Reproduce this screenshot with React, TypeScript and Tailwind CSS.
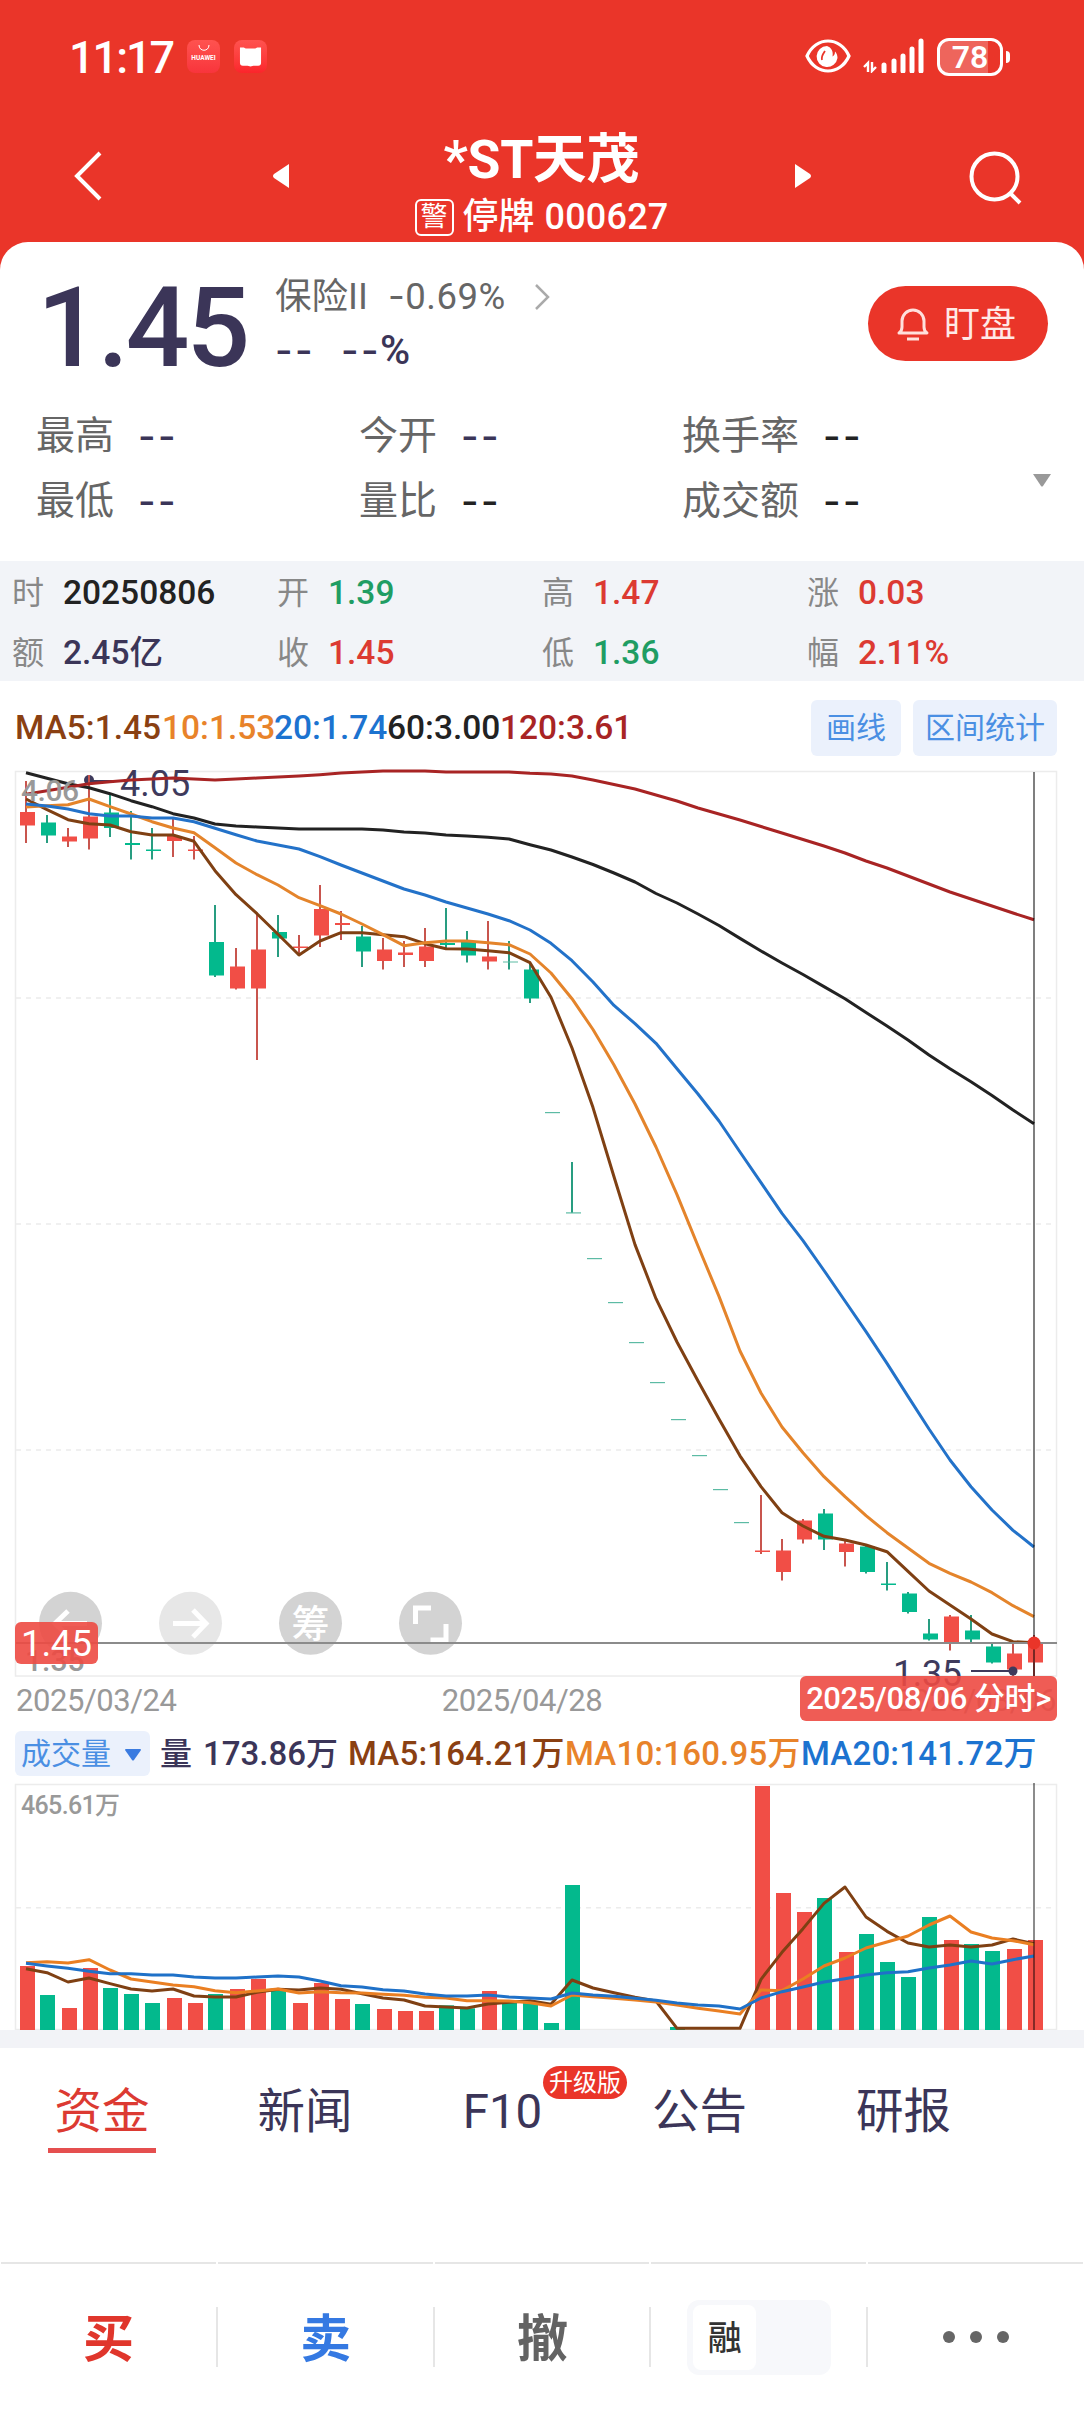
import React from "react";

const UP = "#f14e46";
const DOWN = "#03b98d";
const X0 = 26;
const STEP = 21;

// kind, high, body top, body bottom, low
type Candle = [string, number, number, number, number];

const candles: Candle[] = [
  ["r", 781, 812, 825.5, 843],
  ["g", 815, 822.5, 835.5, 843],
  ["r", 828, 836.5, 841.5, 847],
  ["r", 775, 816.5, 838.5, 849.5],
  ["g", 795, 812.5, 828, 837],
  ["g", 811, 843, 845, 859.5],
  ["g", 828, 849.5, 851, 859.5],
  ["r", 817, 836, 841, 857],
  ["r", 836, 849.5, 851, 859.5],
  ["g", 905, 942, 975.5, 977],
  ["r", 948, 966.5, 988.5, 989.5],
  ["r", 913, 949.5, 988.5, 1060],
  ["g", 915, 932, 938.5, 957],
  ["r", 935, 946.5, 948, 953],
  ["r", 885, 909, 935.5, 947],
  ["r", 911, 923, 925, 940],
  ["g", 926, 936.5, 951.5, 967],
  ["r", 938, 949.5, 961, 969.5],
  ["r", 941, 952.5, 955, 967],
  ["r", 928, 946.5, 961, 967],
  ["g", 908, 943, 945, 950],
  ["g", 931, 942, 955.5, 962.5],
  ["r", 921, 956.5, 961.5, 969.5],
  ["g", 941, 961.5, 962.5, 969.5],
  ["g", 963, 969.5, 998.5, 1003],
  ["g", 1112, 1112, 1113.2, 1113],
  ["g", 1162, 1212.3, 1213.5, 1213],
  ["g", 1258, 1258, 1259.2, 1259],
  ["g", 1302, 1302, 1303.2, 1303],
  ["g", 1342, 1342, 1343.2, 1343],
  ["g", 1382, 1382, 1383.2, 1383],
  ["g", 1419, 1419, 1420.2, 1420],
  ["g", 1455, 1455, 1456.2, 1456],
  ["g", 1489, 1489, 1490.2, 1490],
  ["g", 1522, 1522, 1523.2, 1523],
  ["r", 1495, 1550.5, 1552, 1554],
  ["r", 1539, 1550.5, 1572, 1580.5],
  ["r", 1519, 1520.5, 1539.5, 1543.5],
  ["g", 1509, 1513.5, 1539.5, 1550],
  ["r", 1539, 1543.5, 1552, 1566.5],
  ["g", 1545, 1546.5, 1572, 1573.5],
  ["g", 1562, 1583.5, 1585, 1590.5],
  ["g", 1592, 1593.5, 1612, 1613.5],
  ["g", 1619, 1633.5, 1639.5, 1640.5],
  ["r", 1615, 1616.5, 1642.5, 1650.5],
  ["g", 1615, 1630.5, 1639.5, 1643],
  ["g", 1642, 1646.5, 1662.5, 1663.5],
  ["r", 1642, 1653.5, 1669.5, 1676],
  ["r", 1635, 1642.5, 1662.5, 1676],
];

const ma5 = [799, 809.7, 819.7, 823.7, 825, 831.7, 835, 835, 841.3, 870.7, 894.7, 913.7, 934.3, 955, 941, 932.7, 932.7, 934.7, 936.7, 943.7, 948.7, 949, 950.7, 952.7, 962.7, 997.3, 1048, 1107.6, 1176.8, 1244.6, 1298.7, 1342, 1381, 1419, 1455.8, 1486.6, 1512.7, 1526, 1536.3, 1540, 1545, 1551.7, 1571.3, 1591, 1605, 1619, 1634, 1641.7, 1642.7];
const ma10 = [807, 805.7, 804.7, 799, 806.7, 814, 821.7, 828, 832.7, 847.7, 863, 874.7, 885, 897.7, 905.7, 914, 924, 934.7, 945.7, 942.7, 941, 941, 942.7, 944.7, 954, 973, 998.7, 1029.5, 1065, 1104, 1147, 1194.6, 1246, 1296.4, 1351, 1393, 1427, 1452.7, 1476.7, 1496.7, 1515.7, 1532.7, 1548, 1563.3, 1573.3, 1582, 1592.7, 1605.7, 1616.7];
const ma20 = [804, 806, 809, 813.7, 816, 816, 818, 818, 821.7, 828.3, 834.7, 841, 845, 849, 856.7, 865, 873, 881, 889, 895, 902, 908, 914, 920.7, 930, 943.3, 960.7, 982, 1005.4, 1023.7, 1043.3, 1068.8, 1094, 1121, 1152, 1182.6, 1213.4, 1240.6, 1270.5, 1301, 1331.7, 1363.4, 1396.4, 1429, 1460, 1486.7, 1510, 1530.3, 1547];
const ma60 = [772.7, 778.3, 783.7, 787.7, 793.7, 800.7, 806.7, 813.7, 818, 824, 826, 827, 828, 829, 829, 829, 829, 830, 832, 833, 835, 836, 837.3, 839, 844.7, 850, 857, 864.5, 873, 882, 893.5, 903, 914, 925.5, 938.4, 951, 963, 974.5, 986.6, 998.7, 1012.5, 1026, 1040, 1055, 1068.8, 1081.7, 1095.5, 1110, 1123.7];
const ma120 = [794.3, 790.7, 787.3, 783.7, 781.7, 780, 779, 778, 779, 780, 779, 778, 777, 776, 774.7, 773, 772, 771, 771, 771, 772, 772, 772, 772, 773.3, 774, 776, 780, 784.5, 789, 795, 801, 808, 814, 820, 826.5, 833, 839.5, 846, 853, 861, 868, 876, 884, 892, 899, 906, 913, 919.7];

const volTops = [588, 675, 714, 594, 654, 672, 699, 684, 699, 672, 657, 627, 663, 699, 639, 687, 702, 717, 723, 723, 706, 715, 663, 697, 697, 759, 345, 780, 780, 780, 780, 771, 780, 780, 780, 48, 369, 426, 384, 546, 492, 576, 621, 441, 510, 522, 543, 537, 510];
const vol5 = [596, 608, 636, 624, 641, 657, 663, 657, 678, 681, 681, 667, 658, 660, 654, 658, 671, 684, 690, 708, 711, 714, 702, 697, 692, 703, 630, 654, 668, 682, 693, 775, 775, 775, 775, 628, 547, 476, 400, 351, 441, 484, 519, 531, 525, 531, 525, 507, 521];
const vol10 = [578, 575, 579, 569, 600, 627, 636, 645, 650, 662, 668, 663, 657, 669, 665, 668, 669, 673, 676, 682, 684, 692, 692, 693, 698, 708, 675, 680, 685, 690, 696, 705, 715, 723, 732, 660, 662, 627, 588, 564, 534, 516, 498, 465, 438, 486, 504, 512, 524];
const vol20 = [580, 588, 595, 604, 611, 611, 615, 615, 621, 624, 624, 621, 618, 621, 633, 647, 651, 659, 663, 672, 678, 678, 675, 681, 684, 687, 669, 675, 679, 685, 691, 699, 705, 708, 717, 684, 665, 651, 636, 626, 615, 608, 605, 594, 585, 573, 582, 569, 558];

const line = (ys: number[]) => ys.map((y, i) => `${X0 + STEP * i},${y}`).join(" ");
const volLine = (ys: number[]) => ys.map((y, i) => `${X0 + STEP * i},${1770 + y / 3}`).join(" ");

const StatusBar = () => (
  <div className="flex h-[76px] items-end pl-[69px] pr-[74px]">
    <span className="w-[118px] text-[45px] font-medium leading-[36px] tracking-[-2px]">11:17</span>
    <div className="mb-[3px] flex h-[33px] w-[33px] flex-col items-center rounded-[8px] bg-gradient-to-b from-[#ff524f] to-[#f8343c]">
      <svg width="12" height="7" viewBox="0 0 12 7" className="mt-[5px]" fill="none" stroke="#fff" strokeWidth="1">
        <path d="M1 0c0 7 10 7 10 0" />
      </svg>
      <span className="mt-[2px] text-[6.5px] font-bold leading-[9px]">HUAWEI</span>
    </div>
    <div className="mb-[3px] ml-[14px] flex h-[33px] w-[33px] items-center justify-center rounded-[8px] bg-gradient-to-b from-[#ff524f] to-[#fb242b]">
      <svg width="23" height="20" viewBox="0 0 24 20" fill="#fff">
        <path d="M1 0h4l2 1h10l2-1h4v16q0 3-3 3h-5l-3 1-3-1H4q-3 0-3-3z" />
      </svg>
    </div>
    <div className="ml-auto flex items-end">
      <svg width="46" height="34" viewBox="0 0 46 34" className="mb-[3px]">
        <path d="M2 17C11-3 35-3 44 17 35 37 11 37 2 17Z" fill="none" stroke="#fff" strokeWidth="3.200" />
        <path d="M22 7a10.500 10.500 0 1 0 10.500 12c0-3-1-5-2.500-6.500 0 3-1 4-2.500 5 1-5-1-9-5.500-10.500z" fill="#fff" />
        <path d="M17 21c-1-4 1-6 3-9" stroke="#ea3529" strokeWidth="1.800" fill="none" />
      </svg>
      <svg width="62" height="36" viewBox="0 0 62 36" className="ml-[12px] mb-[3px]" stroke="#fff" fill="none">
        <path d="M1 30l4-4v9M9 25v9l4-4" strokeWidth="2.400" />
        <path d="M21 28v6M31 24v10M40 19v15M49 12v22M58 4v30" strokeWidth="5" strokeLinecap="round" />
      </svg>
      <div className="ml-[12px] flex h-[38px] w-[66px] items-center justify-center rounded-[12px] border-[3px] border-white bg-linear-to-r from-[#ee655c] from-80% to-[#ea3529] to-80%">
        <span className="text-[32px] font-semibold leading-none">78</span>
      </div>
      <div className="mb-[13px] ml-[3px] h-[12px] w-[4px] rounded-r-full bg-white" />
    </div>
  </div>
);

const Header = () => (
  <header className="h-[242px] text-white">
    <StatusBar />
    <div className="flex pt-[54px]">
      <svg width="28" height="50" viewBox="0 0 28 50" className="ml-[74px] mt-[21px]" fill="none" stroke="#fff" strokeWidth="4">
        <path d="M26 2L3 25l23 23" />
      </svg>
      <svg width="18" height="26" viewBox="0 0 18 26" className="ml-[170px] mt-[33px]" fill="#fff">
        <path d="M17 1v24L2 15q-2-2 0-4z" />
      </svg>
      <div className="flex w-[503px] flex-col items-center">
        <div className="mt-[2px] text-[53.5px] font-bold leading-[56px] tracking-[-0.3px]">*ST天茂</div>
        <div className="mt-[7px] flex items-center">
          <div className="flex h-[37px] w-[39px] items-center justify-center rounded-[6px] border-2 border-white text-[27px] leading-none">警</div>
          <span className="ml-[9px] text-[36px] font-medium leading-[44px]">停牌</span>
          <span className="ml-[10px] text-[36px] font-medium leading-[44px] tracking-[0.2px]">000627</span>
        </div>
      </div>
      <svg width="18" height="26" viewBox="0 0 18 26" className="ml-[1px] mt-[33px]" fill="#fff">
        <path d="M1 1v24l15-10q2-2 0-4z" />
      </svg>
      <svg width="54" height="54" viewBox="0 0 54 54" className="ml-[157px] mt-[21px]" fill="none" stroke="#fff" strokeWidth="4">
        <circle cx="25.500" cy="25.500" r="23" />
        <path d="M41 42l10 10" />
      </svg>
    </div>
  </header>
);

const Dashes = () => (
  <span className="inline-flex w-[39px] items-center whitespace-pre font-['Inter'] text-[38px] leading-none tracking-[2.5px]">
    --
  </span>
);

const Quote = () => (
  <div className="flex h-[148px] pt-[25px]">
    <div className="ml-[37px] w-[238px] text-[112px] font-medium leading-[122px] tracking-[-3px] text-[#3b3558]">1.45</div>
    <div className="w-[593px] pt-[7px]">
      <div className="flex h-[46px] items-center text-[36.5px] text-[#666]">
        <span className="w-[113px] leading-none">保险II</span>
        <span className="w-[146px] leading-none tracking-[0.5px]"><span className="font-['Inter']">-</span>0.69%</span>
        <svg width="16" height="28" viewBox="0 0 16 28" fill="none" stroke="#aaa" strokeWidth="2.500">
          <path d="M2 2l12 12L2 26" />
        </svg>
      </div>
      <div className="mt-[6px] flex h-[48px] items-center font-medium text-[#3b3558]">
        <Dashes />
        <span className="w-[27px]" />
        <Dashes />
        <span className="text-[41px] font-medium leading-none">%</span>
      </div>
    </div>
    <button className="mt-[19px] flex h-[75px] w-[180px] items-center rounded-full bg-[#ea3529] pl-[28px] pt-[2px] text-[36px] leading-none text-[#ffe9e6]">
      <svg width="34" height="36" viewBox="0 0 34 36" className="-mt-[2px]" fill="none" stroke="#ffe0dc" strokeWidth="3" strokeLinejoin="round">
        <path d="M3 27q3-2 3-6v-6a11 11 0 0 1 22 0v6q0 4 3 6z" />
        <path d="M11 33h12" />
      </svg>
      <span className="ml-[14px]">盯盘</span>
    </button>
  </div>
);

const stats = [
  ["最高", "text-[#3b3558]", "今开", "text-[#3b3558]", "换手率", "text-[#222]"],
  ["最低", "text-[#3b3558]", "量比", "text-[#222]", "成交额", "text-[#222]"],
];

const Stats = () => (
  <div className="relative h-[171px] pt-[14px] text-[39px] text-[#666]">
    {stats.map((r) => (
      <div key={r[0]} className="flex h-[65px] items-center pl-[36px]">
        <div className="flex w-[323px] items-center leading-none">
          {r[0]}
          <span className={"ml-[24px] font-medium " + r[1]}><Dashes /></span>
        </div>
        <div className="flex w-[323px] items-center leading-none">
          {r[2]}
          <span className={"ml-[24px] font-medium " + r[3]}><Dashes /></span>
        </div>
        <div className="flex items-center leading-none">
          {r[4]}
          <span className={"ml-[24px] font-medium " + r[5]}><Dashes /></span>
        </div>
      </div>
    ))}
    <svg width="20" height="14" viewBox="0 0 20 14" className="absolute left-[1032px] top-[84px]" fill="#999">
      <path d="M1 0h18l-8 12q-1 1-2 0z" />
    </svg>
  </div>
);

const dayRows = [
  [["时", "20250806", "text-[#222]"], ["开", "1.39", "text-[#1f9d63]"], ["高", "1.47", "text-[#dc3a32]"], ["涨", "0.03", "text-[#dc3a32]"]],
  [["额", "2.45亿", "text-[#3b3558]"], ["收", "1.45", "text-[#dc3a32]"], ["低", "1.36", "text-[#1f9d63]"], ["幅", "2.11%", "text-[#dc3a32]"]],
];

const DayInfo = () => (
  <div className="h-[120px] bg-[#f2f4f8] pt-[1.5px]">
    {dayRows.map((row, i) => (
      <div key={i} className="flex h-[60px] items-center pl-[12px]">
        {row.map(([k, v, c]) => (
          <div key={k} className="flex w-[265px] items-center">
            <span className="w-[51px] text-[32px] leading-none text-[#888]">{k}</span>
            <span className={"text-[33.5px] font-medium leading-none " + c}>{v}</span>
          </div>
        ))}
      </div>
    ))}
  </div>
);

const MaLegend = () => (
  <div className="flex h-[91px] items-center pl-[15px] pt-[2px] text-[33.5px] font-medium leading-none">
    <span className="w-[147px] text-[#8a4012]">MA5:1.45</span>
    <span className="w-[112px] text-[#e8832a]">10:1.53</span>
    <span className="w-[113px] text-[#1c73d0]">20:1.74</span>
    <span className="w-[113px] text-[#222]">60:3.00</span>
    <span className="w-[311px] text-[#a82424]">120:3.61</span>
    <span className="flex h-[56px] w-[90px] items-center justify-center rounded-[6px] bg-[#ebf1fc] text-[30px] font-normal text-[#4a8fe3]">画线</span>
    <span className="ml-[12px] flex h-[56px] w-[144px] items-center justify-center rounded-[6px] bg-[#ebf1fc] text-[30px] font-normal text-[#4a8fe3]">区间统计</span>
  </div>
);

const PriceChart = () => (
  <svg width="1084" height="910" viewBox="0 772 1084 910" className="block overflow-visible" fontFamily="Roboto, 'Noto Sans CJK SC', sans-serif">
    <g stroke="#ececec" strokeWidth="1.500" fill="none">
      <rect x="15.500" y="771.500" width="1041" height="904.500" />
      <path d="M16 998H1056M16 1224H1056M16 1450H1056" strokeDasharray="5 5" />
    </g>
    <circle cx="89" cy="780" r="5" fill="#3e3a5c" />
    <path d="M89 781h28" stroke="#3e3a5c" strokeWidth="2" />
    <text x="120" y="796" fontSize="36" fill="#3e3a5c">4.05</text>
    {candles.map(([k, hi, top, bot, lo], i) => {
      const x = X0 + STEP * i;
      const c = k === "r" ? UP : DOWN;
      const wick = k === "r" ? "#c8554e" : "#289d81";
      const dash = bot - top < 1.3;
      return (
        <g key={i}>
          {lo - hi > 2 && <path d={`M${x} ${hi}V${lo}`} stroke={wick} strokeWidth="2" />}
          <rect x={x - 6} y={top} width="15" height={bot - top} fill={dash ? "#5cbba4" : c} />
        </g>
      );
    })}
    <g fill="none" strokeWidth="3" strokeLinejoin="round">
      <polyline points={line(ma60)} stroke="#222" />
      <polyline points={line(ma5)} stroke="#7f4013" />
      <polyline points={line(ma10)} stroke="#e4842b" />
      <polyline points={line(ma20)} stroke="#2372c9" />
      <polyline points={line(ma120)} stroke="#a82424" />
    </g>
    <text x="21" y="801" fontSize="30" fill="#999" fontWeight="500" textLength="58">4.06</text>
    <text x="893" y="1686" fontSize="36" fill="#3e3a5c" textLength="69">1.35</text>
    <path d="M971 1671h42" stroke="#3e3a5c" strokeWidth="2" />
    <circle cx="1013" cy="1671" r="4.500" fill="#3e3a5c" />
    {/* chart tool buttons */}
    <g fill="#d3d3d3">
      <circle cx="70.500" cy="1623.300" r="31.500" />
      <circle cx="190.500" cy="1623.300" r="31.500" fill="#e7e7e7" />
      <circle cx="310.500" cy="1623.300" r="31.500" />
      <circle cx="430.500" cy="1623.300" r="31.500" />
    </g>
    <g fill="none" stroke="#fff" strokeWidth="5">
      <path d="M87 1623.500H54M68 1611l-13 12.500 13 12.500" />
      <path d="M173 1623.500h33M193 1610l13 13.500-13 13.500" />
      <path d="M415.500 1624v-16H431M446 1624v16H430.500" />
    </g>
    <text x="310.500" y="1637" textAnchor="middle" fontSize="38" fontWeight="500" fill="#fff">筹</text>
    <text x="25" y="1671" fontSize="30" fill="#999" fontWeight="500">1.35</text>
    <path d="M16 1643H1057" stroke="#8b8b8b" strokeWidth="1.800" />
    <path d="M1034 772V1676" stroke="#000" strokeOpacity=".5" strokeWidth="2" />
    <circle cx="1034" cy="1643" r="6.500" fill="#ea3529" />
    <rect x="15" y="1622" width="83" height="42" rx="6" fill="#ed4a42" fillOpacity=".9" />
    <text x="21" y="1656" fontSize="37" fill="#fff" textLength="71">1.45</text>
  </svg>
);

const DateRow = () => (
  <div className="relative flex h-[42px] items-center justify-between pb-[5px] pl-[16px] pr-[28px] text-[31px] leading-none tracking-[-0.45px] text-[#999]">
    <span>2025/03/24</span>
    <span className="mr-[28px]">2025/04/28</span>
    <span>2025/08/06</span>
    <div className="absolute left-[800px] top-[-6px] flex h-[45px] w-[257px] items-center justify-center whitespace-pre rounded-[6px] bg-[#ed4a42]/90 text-[31px] font-medium text-white">
      2025/08/06 分时&gt;
    </div>
  </div>
);

const VolumeLegend = () => (
  <div className="flex h-[57px] items-center pl-[15px] pt-[2px] text-[33px] font-medium leading-none">
    <div className="flex h-[45px] w-[135px] items-center rounded-[6px] bg-[#ebf1fc] pl-[6px] text-[30px] font-normal text-[#4a8fe3]">
      成交量
      <svg width="16" height="12" viewBox="0 0 16 12" className="ml-[14px] mt-[2px]" fill="#3a7be0">
        <path d="M0 1q0-1 1-1h14q1 0 1 1l-7 10q-1 1-2 0z" />
      </svg>
    </div>
    <span className="ml-[10px] w-[43px] text-[32px] text-[#3b3558]">量</span>
    <span className="w-[145px] text-[#3b3558]">173.86<span className="text-[32px]">万</span></span>
    <span className="w-[217px] tracking-[0.2px] text-[#8a4012]">MA5:164.21<span className="text-[33px]">万</span></span>
    <span className="w-[236px] tracking-[0.2px] text-[#e8832a]">MA10:160.95<span className="text-[33px]">万</span></span>
    <span className="tracking-[0.2px] text-[#1c73d0]">MA20:141.72<span className="text-[33px]">万</span></span>
  </div>
);

const VolumeChart = () => (
  <svg width="1084" height="249" viewBox="0 1781 1084 249" className="block" fontFamily="Roboto, 'Noto Sans CJK SC', sans-serif">
    <g stroke="#ececec" strokeWidth="1.500" fill="none">
      <rect x="15.500" y="1784.500" width="1041" height="245" />
      <path d="M16 1907.700H1056" strokeDasharray="5 5" />
    </g>
    <text x="21" y="1814" fontSize="25" fill="#999" fontWeight="500" textLength="99">465.61万</text>
    {volTops.map((t, i) => {
      const red = candles[i][0] === "r";
      return (
        <rect key={i} x={X0 + STEP * i - (red ? 6 : 7)} y={1770 + t / 3} width="15" height={(780 - t) / 3} fill={red ? UP : DOWN} />
      );
    })}
    <g fill="none" strokeWidth="3" strokeLinejoin="round">
      <polyline points={volLine(vol5)} stroke="#7f4013" />
      <polyline points={volLine(vol10)} stroke="#ea7f22" />
      <polyline points={volLine(vol20)} stroke="#1f71c8" />
    </g>
    <path d="M1034 1783V2030" stroke="#000" strokeOpacity=".45" strokeWidth="2" />
  </svg>
);

const Tabs = () => (
  <div className="relative flex h-[214px] pl-[2px] pt-[31px] text-[47.5px] leading-[66px] text-[#3b3558]">
    <div className="flex w-[200px] flex-col items-center">
      <span className="text-[#dc3a32]">资金</span>
      <span className="mt-[3px] h-[5px] w-[108px] bg-[#e54f4f]" />
    </div>
    <span className="w-[206px] text-center">新闻</span>
    <span className="w-[189px] text-center">F10</span>
    <span className="w-[205px] text-center">公告</span>
    <span className="w-[203px] text-center">研报</span>
    <span className="absolute left-[543px] top-[18px] flex h-[33px] w-[84px] items-center justify-center rounded-full bg-[#ea3529] pt-[1px] text-[24px] leading-none text-white">升级版</span>
  </div>
);

const tradeItems = [
  <span className="pt-[4px] text-[#e0362c]">买</span>,
  <span className="pt-[4px] text-[#3579e2]">卖</span>,
  <span className="pt-[4px] text-[#636363]">撤</span>,
  <div className="flex h-[75px] w-[144px] items-center rounded-[12px] bg-[#f7f8fb] pl-[6px]">
    <span className="flex h-[65px] w-[63px] items-center justify-center rounded-[8px] bg-white pt-[2px] text-[34px] font-medium text-[#333]">融</span>
  </div>,
  <div className="flex gap-[15px]">
    <i className="h-[12px] w-[12px] rounded-full bg-[#666]" />
    <i className="h-[12px] w-[12px] rounded-full bg-[#666]" />
    <i className="h-[12px] w-[12px] rounded-full bg-[#666]" />
  </div>,
];

const TradeBar = () => (
  <div className="grid h-[150px] grid-cols-5 text-[51px] font-bold leading-none">
    {tradeItems.map((el, i) => (
      <div key={i} className="flex flex-col">
        <div className="mx-px h-[2px] bg-[#e6e6e6]" />
        <div className="mt-[43px] flex h-[60px] items-center">
          {i > 0 && <div className="-ml-px h-[60px] w-[2px] bg-[#e6e6e6]" />}
          <div className="flex flex-1 items-center justify-center">{el}</div>
        </div>
      </div>
    ))}
  </div>
);

const App = () => {
  return (
    <div className="h-[2412px] w-[1084px] overflow-hidden bg-[#ea3529] font-['Roboto','Noto_Sans_CJK_SC',sans-serif]">
      <Header />
      <div className="h-[2170px] rounded-t-[28px] bg-white">
        <Quote />
        <Stats />
        <DayInfo />
        <MaLegend />
        <PriceChart />
        <DateRow />
        <VolumeLegend />
        <VolumeChart />
        <div className="h-[18px] bg-[#f2f3f7]" />
        <Tabs />
        <TradeBar />
      </div>
    </div>
  );
};

export default App;
